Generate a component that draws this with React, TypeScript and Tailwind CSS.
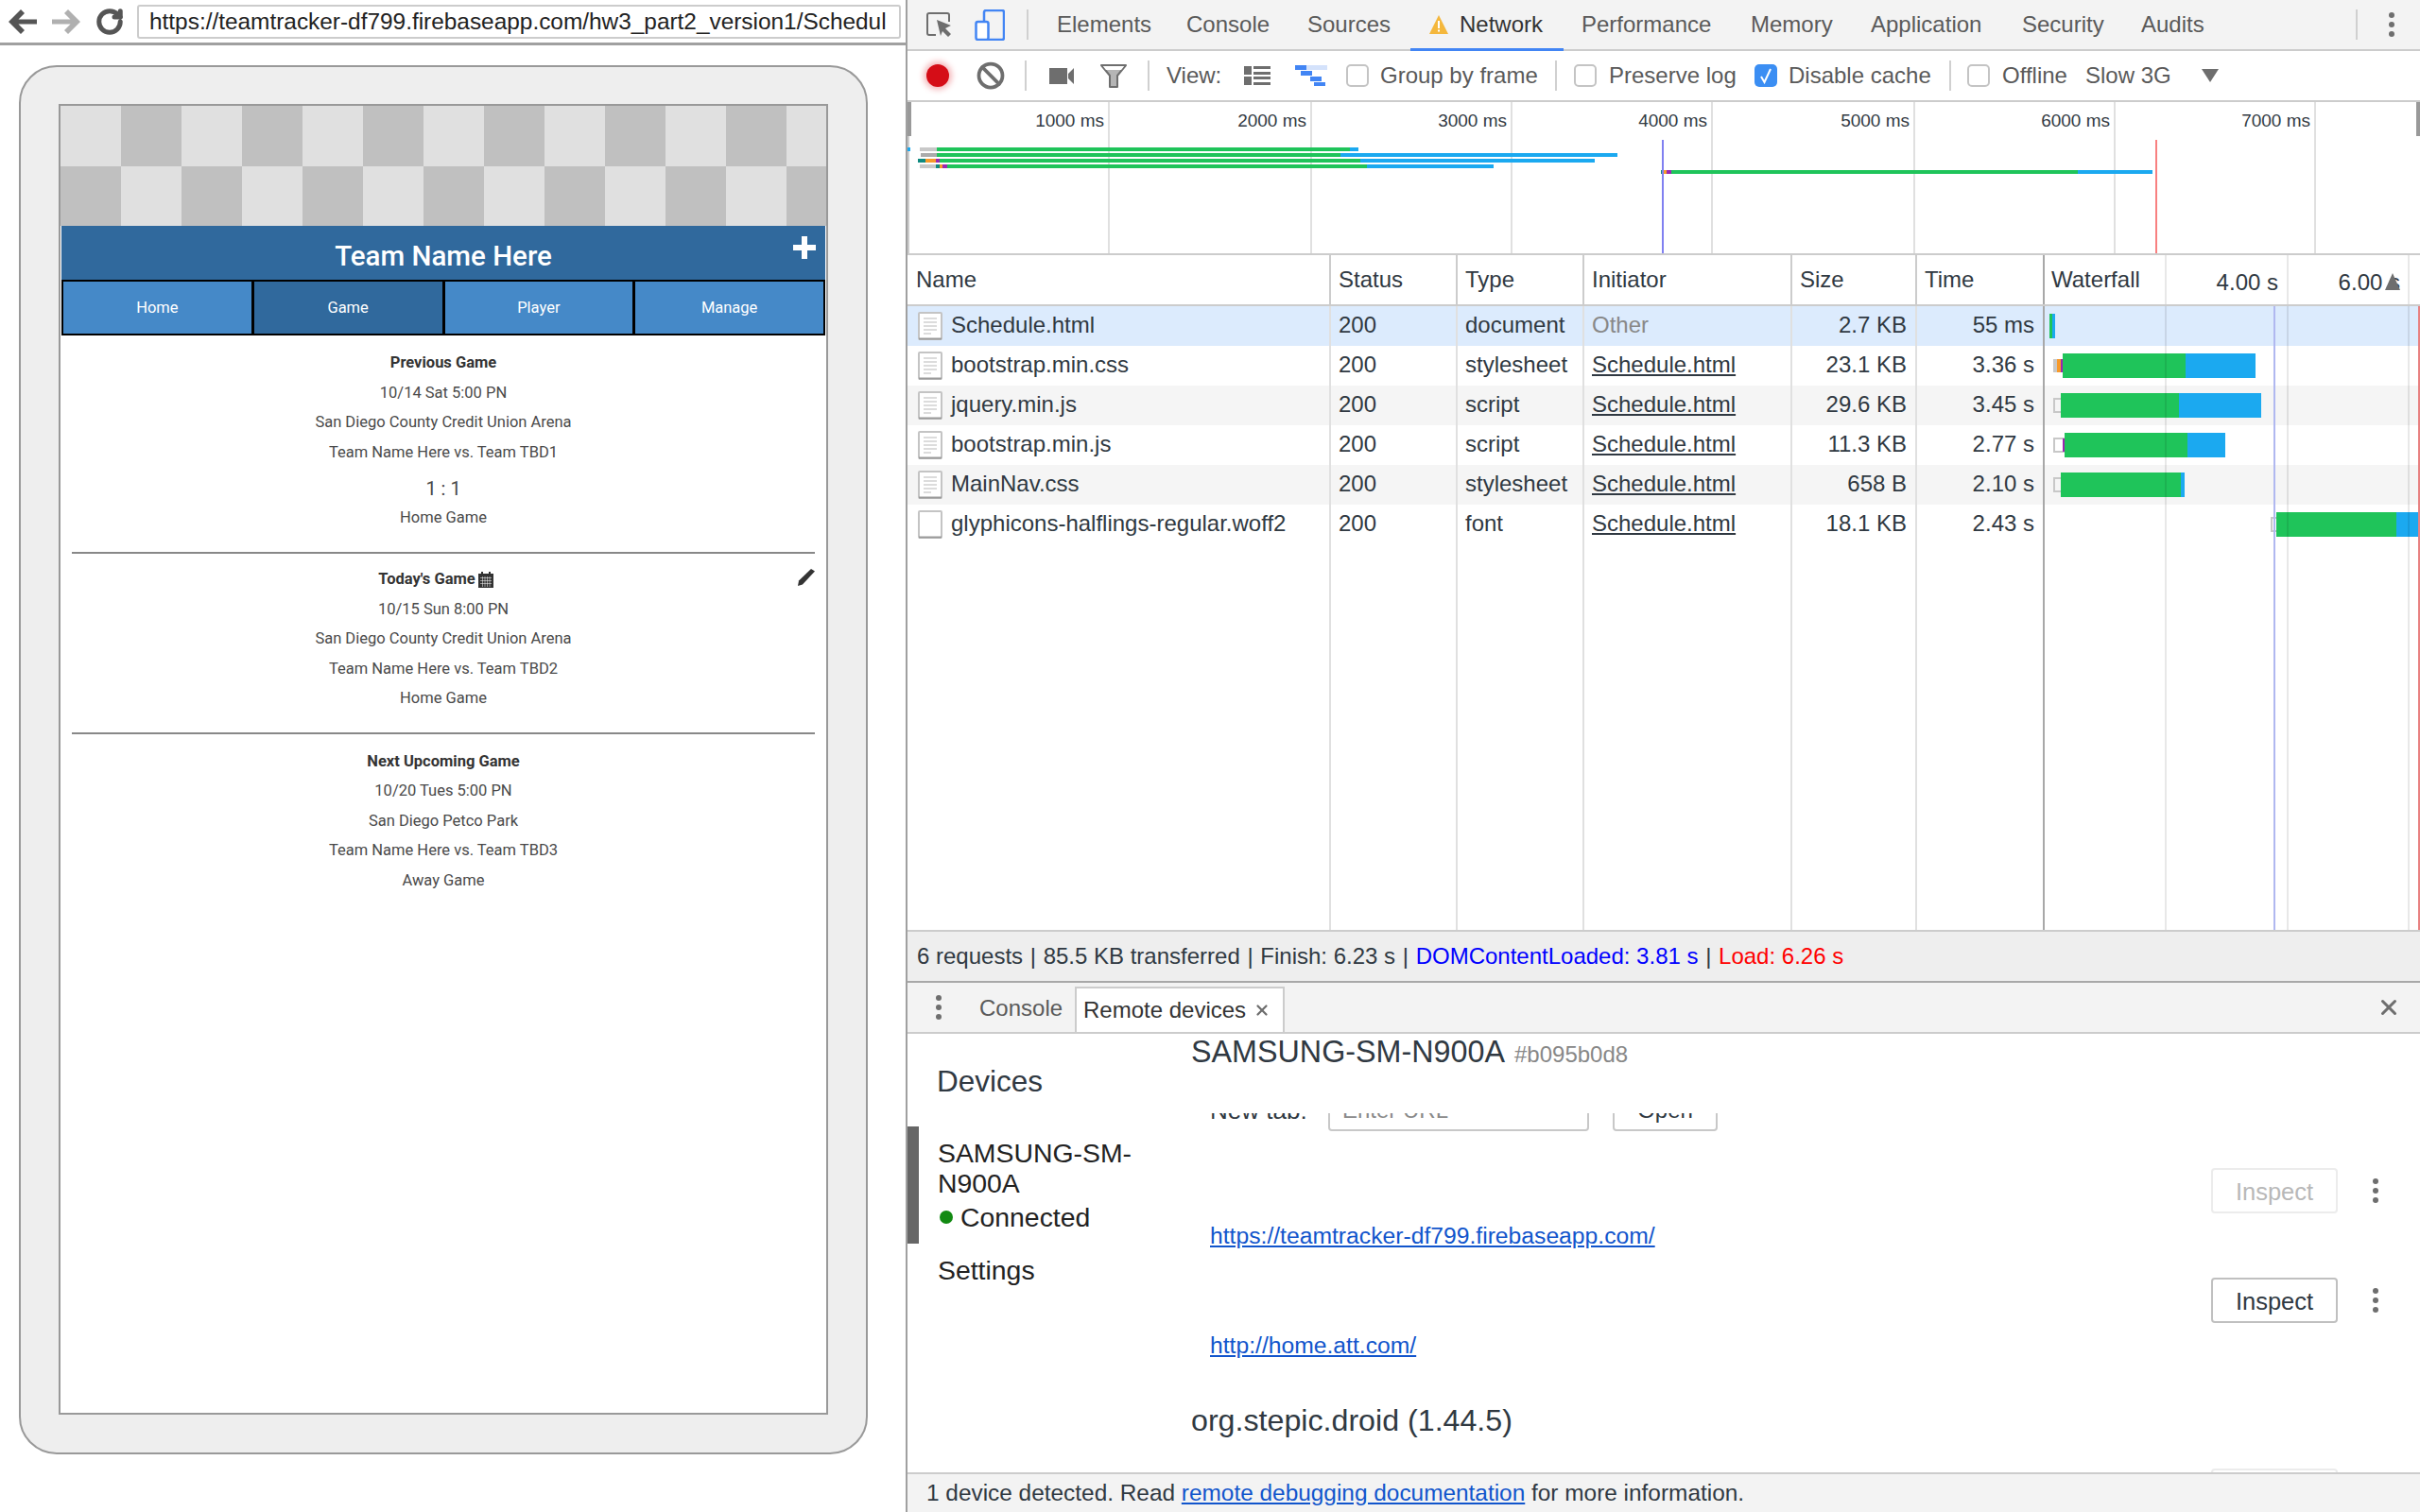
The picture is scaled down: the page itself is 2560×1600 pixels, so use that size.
import { Ban, RotateCw, X } from "lucide-react";

const sans = "font-['Liberation_Sans',sans-serif]";

const tabs = [
  { label: "Elements", w: "w-[137px]" },
  { label: "Console", w: "w-[128px]" },
  { label: "Sources", w: "w-[129px]" },
  { label: "Network", w: "w-[161px]", active: true },
  { label: "Performance", w: "w-[179px]" },
  { label: "Memory", w: "w-[127px]" },
  { label: "Application", w: "w-[160px]" },
  { label: "Security", w: "w-[126px]" },
  { label: "Audits", w: "w-[227px]" },
];

const requests = [
  { name: "Schedule.html", status: "200", type: "document", init: "Other", size: "2.7 KB", time: "55 ms" },
  { name: "bootstrap.min.css", status: "200", type: "stylesheet", init: "Schedule.html", size: "23.1 KB", time: "3.36 s" },
  { name: "jquery.min.js", status: "200", type: "script", init: "Schedule.html", size: "29.6 KB", time: "3.45 s" },
  { name: "bootstrap.min.js", status: "200", type: "script", init: "Schedule.html", size: "11.3 KB", time: "2.77 s" },
  { name: "MainNav.css", status: "200", type: "stylesheet", init: "Schedule.html", size: "658 B", time: "2.10 s" },
  { name: "glyphicons-halflings-regular.woff2", status: "200", type: "font", init: "Schedule.html", size: "18.1 KB", time: "2.43 s", blank: true },
];

const games = [
  {
    title: "Previous Game",
    lines: ["10/14 Sat 5:00 PN", "San Diego County Credit Union Arena", "Team Name Here vs. Team TBD1"],
    score: "1 : 1",
    last: "Home Game",
  },
  {
    title: "Today's Game",
    lines: ["10/15 Sun 8:00 PN", "San Diego County Credit Union Arena", "Team Name Here vs. Team TBD2"],
    last: "Home Game",
    today: true,
  },
  {
    title: "Next Upcoming Game",
    lines: ["10/20 Tues 5:00 PN", "San Diego Petco Park", "Team Name Here vs. Team TBD3"],
    last: "Away Game",
  },
];

function Dots() {
  return (
    <div className="flex flex-col items-center gap-[4px]">
      <span className="w-[6px] h-[6px] rounded-full bg-[#6e6e6e]" />
      <span className="w-[6px] h-[6px] rounded-full bg-[#6e6e6e]" />
      <span className="w-[6px] h-[6px] rounded-full bg-[#6e6e6e]" />
    </div>
  );
}

function Checkbox({ checked }: { checked?: boolean }) {
  return checked ? (
    <span className="flex items-center justify-center w-[24px] h-[24px] rounded-[5px] bg-[#3b8ef3]">
      <svg width="14" height="18" viewBox="0 0 14 18">
        <path d="M2 10l3.5 6L12 2" fill="none" stroke="#fff" strokeWidth="2" />
      </svg>
    </span>
  ) : (
    <span className="block w-[24px] h-[24px] rounded-[5px] border-2 border-[#c4c4c4] bg-white" />
  );
}

function Sep() {
  return <span className="block w-[2px] h-[32px] bg-[#d0d0d0]" />;
}

function FileIcon({ blank }: { blank?: boolean }) {
  return (
    <svg width="26" height="30" viewBox="0 0 26 30" className="shrink-0 mt-[2px]">
      <rect x="1" y="1" width="24" height="28" fill="#fff" stroke="#c4c4c4" strokeWidth="2" rx="1" />
      <path d="M1 28.500h24" stroke="#9a9a9a" strokeWidth="2" />
      {!blank && (
        <path d="M6 7h14M6 11h14M6 15h14M6 19h14M6 23h8" stroke="#dcdcdc" strokeWidth="2" />
      )}
    </svg>
  );
}

function Phone() {
  return (
    <div className="ml-[20px] mt-[21px] w-[898px] h-[1470px] rounded-[40px] border-2 border-[#999999] bg-[#eeeeee] pl-[40px] pt-[39px]">
      <div className="w-[814px] h-[1387px] border-2 border-[#999999] bg-white font-['Roboto',sans-serif] overflow-hidden">
        <div className="grid grid-cols-[repeat(13,64px)] grid-rows-[64px_63px] h-[127px] overflow-hidden">
          {Array.from({ length: 26 }).map((_, i) => {
            const row = i < 13 ? 0 : 1;
            const dark = (i % 13 + row) % 2 === 1;
            return <div key={i} className={dark ? "bg-[#c0c0c0]" : "bg-[#e0e0e0]"} />;
          })}
        </div>
        <div className="mx-[1px] relative h-[57px] bg-[#30699d] flex items-center justify-center pt-[8px] text-white text-[29.500px] font-medium">
          Team Name Here
          <svg width="24" height="24" viewBox="0 0 24 24" className="absolute right-[10px] top-[11px]">
            <path d="M9 0h6v9h9v6h-9v9H9v-9H0V9h9z" fill="#fff" />
          </svg>
        </div>
        <div className="mx-[1px] flex h-[59px]">
          {["Home", "Game", "Player", "Manage"].map((n) => (
            <div
              key={n}
              className={`flex-1 flex items-center justify-center pt-[2px] border-2 border-black -ml-[1px] first:ml-0 text-white text-[16.500px] ${n === "Game" ? "bg-[#30699d]" : "bg-[#4589c8]"}`}
            >
              {n}
            </div>
          ))}
        </div>
        <div className="pt-[14px]">
          {games.map((g, i) => (
            <div key={g.title}>
              <div className="relative">
                <div className={`h-[31.500px] flex items-center justify-center gap-[3px] text-[16.500px] font-bold text-[#333333] ${g.today ? "pr-[16px]" : ""}`}>
                  {g.title}
                  {g.today && (
                    <svg width="16" height="17" viewBox="0 0 16 17">
                      <path d="M0 2h3V0h2v2h6V0h2v2h3v15H0z" fill="#333" />
                      <path d="M2 6.500h12M2 9.500h12M2 12.500h12M4.500 5v11M7 5v11M9.500 5v11M12 5v11" stroke="#fff" strokeWidth=".5" />
                    </svg>
                  )}
                </div>
                {g.today && (
                  <svg width="18" height="18" viewBox="0 0 18 18" className="absolute right-[12px] top-[4px]">
                    <path d="M14 0l4 2.500L5 16.500 0 18l1-5.500z" fill="#333" />
                  </svg>
                )}
              </div>
              <div className="text-[16.500px] text-[#4a4a4a] text-center">
                {g.lines.map((l) => (
                  <div key={l} className="h-[31.500px] flex items-center justify-center">
                    {l}
                  </div>
                ))}
                {g.score && (
                  <div className="h-[37.500px] flex items-center justify-center text-[20px] pt-[6px]">{g.score}</div>
                )}
                <div className="h-[31.500px] flex items-center justify-center">{g.last}</div>
              </div>
              {i === 0 && <div className="mx-[12px] mt-[20px] mb-[12px] h-[2px] bg-[#888888]" />}
              {i === 1 && <div className="mx-[12px] mt-[19px] mb-[14px] h-[2px] bg-[#888888]" />}
            </div>
          ))}
        </div>
      </div>
    </div>
  );
}

function BrowserPane() {
  return (
    <div className="w-[960px] shrink-0 border-r-2 border-[#a0a0a0] bg-white">
      <div className="h-[48px] border-b-[3px] border-[#a0a0a0] flex items-center relative">
        <svg width="30" height="26" viewBox="0 0 30 26" className="ml-[9px]">
          <path d="M13 0l4 4-6.500 6.500H30v5H10.500L17 22l-4 4L0 13z" fill="#555555" />
        </svg>
        <svg width="30" height="26" viewBox="0 0 30 26" className="ml-[16px]">
          <path d="M17 0l-4 4 6.500 6.500H0v5h19.500L13 22l4 4 13-13z" fill="#b0b0b0" />
        </svg>
        <RotateCw className="ml-[16px] text-[#555555]" size={30} strokeWidth={4} />
        <div className={`${sans} ml-[14px] w-[808px] h-[36px] rounded-[3px] border-2 border-[#cccccc] bg-white pl-[11px] pr-[12px] text-[24.400px] leading-[32px] text-[#222222] whitespace-nowrap overflow-hidden`}>
          https://teamtracker-df799.firebaseapp.com/hw3_part2_version1/Schedul
        </div>
      </div>
      <Phone />
    </div>
  );
}

function DevtoolsTabs() {
  return (
    <div className="h-[54px] border-b-2 border-[#cccccc] bg-[#f3f3f3] flex items-center text-[24px] text-[#5a5a5a]">
      <svg width="28" height="26" viewBox="0 0 28 26" className="ml-[20px]">
        <path d="M10 24H3a2 2 0 0 1-2-2V3a2 2 0 0 1 2-2h19a2 2 0 0 1 2 2v7" fill="none" stroke="#6e6e6e" strokeWidth="2" />
        <path d="M11 8l15 6-6 3 6 6-3 3-6-6-2 5z" fill="#6e6e6e" />
      </svg>
      <svg width="32" height="33" viewBox="0 0 32 33" className="ml-[23px]">
        <path d="M10 14V3a2 2 0 0 1 2-2h17a2 2 0 0 1 2 2v27a2 2 0 0 1-2 2H14" fill="none" stroke="#4285f4" strokeWidth="2.500" />
        <rect x="1.500" y="13" width="13" height="19" rx="2" fill="#fff" stroke="#4285f4" strokeWidth="2.500" />
      </svg>
      <span className="ml-[23px]"><Sep /></span>
      <div className="flex ml-[30px] items-center">
        {tabs.map((t) => (
          <div key={t.label} className={`${t.w} shrink-0 relative flex items-center h-[52px] ${t.active ? "text-[#333333]" : ""}`}>
            {t.active && (
              <>
                <svg width="20" height="20" viewBox="0 0 20 20" className="mr-[12px]">
                  <path d="M10 0l10 20H0z" fill="#f4b73c" />
                  <path d="M9 6h2v8H9zM9 15.500h2v2H9z" fill="#fff" />
                </svg>
                <span className="absolute left-[-20px] w-[162px] bottom-[-2px] h-[3px] bg-[#4285f4]" />
              </>
            )}
            {t.label}
          </div>
        ))}
      </div>
      <Sep />
      <span className="ml-[33px]"><Dots /></span>
    </div>
  );
}

function NetToolbar() {
  return (
    <div className="h-[54px] border-b-2 border-[#cccccc] bg-white flex items-center text-[24px] text-[#5a5a5a] whitespace-nowrap">
      <span className="ml-[20px] w-[24px] h-[24px] rounded-full bg-[#d50d17] shadow-[0_0_6px_3px_#f4b6b9]" />
      <Ban className="ml-[29px] text-[#6e6e6e]" size={30} strokeWidth={3} />
      <span className="ml-[21px]"><Sep /></span>
      <svg width="26" height="17" viewBox="0 0 26 17" className="ml-[24px]">
        <path d="M0 0h19v17H0zM20 6l6-6v17l-6-6z" fill="#6e6e6e" />
      </svg>
      <svg width="28" height="25" viewBox="0 0 28 25" className="ml-[28px]">
        <path d="M1 1h26L18 12v12h-8V12z" fill="#b5b5b5" stroke="#6e6e6e" strokeWidth="2" strokeLinejoin="round" />
        <path d="M2 1h24l-4 5H6z" fill="#fff" />
        <path d="M1 1h26" stroke="#6e6e6e" strokeWidth="2" />
      </svg>
      <span className="ml-[22px]"><Sep /></span>
      <span className="ml-[18px] w-[82px]">View:</span>
      <svg width="28" height="20" viewBox="0 0 28 20">
        <path d="M0 0h8v9H0zM10 0h18v3H10zM10 6h18v3H10zM0 11h8v9H0zM10 11h18v3H10zM10 17h18v3H10z" fill="#6e6e6e" />
      </svg>
      <svg width="34" height="22" viewBox="0 0 34 22" className="ml-[26px]">
        <path d="M12 0h22v5H12z" fill="#d4e2fb" />
        <path d="M0 0h12v5H0zM6 6h12v5H6zM16 12h12v5H16zM20 18h12v4H20z" fill="#4285f4" />
      </svg>
      <span className="ml-[20px]"><Checkbox /></span>
      <span className="ml-[12px] w-[185px]">Group by frame</span>
      <Sep />
      <span className="ml-[18px]"><Checkbox /></span>
      <span className="ml-[13px] w-[154px]">Preserve log</span>
      <Checkbox checked />
      <span className="ml-[12px] w-[170px]">Disable cache</span>
      <Sep />
      <span className="ml-[17px]"><Checkbox /></span>
      <span className="ml-[13px] w-[88px]">Offline</span>
      <span className="w-[123px]">Slow 3G</span>
      <svg width="18" height="14" viewBox="0 0 18 14">
        <path d="M0 0h18L9 14z" fill="#6e6e6e" />
      </svg>
    </div>
  );
}

function Overview() {
  const ticks = [
    { label: "1000 ms", w: "w-[214px]" },
    { label: "2000 ms", w: "w-[214px]" },
    { label: "3000 ms", w: "w-[212px]" },
    { label: "4000 ms", w: "w-[212px]" },
    { label: "5000 ms", w: "w-[214px]" },
    { label: "6000 ms", w: "w-[212px]" },
    { label: "7000 ms", w: "w-[212px]" },
  ];
  return (
    <div className="relative h-[162px] border-b-2 border-[#cccccc] bg-white flex overflow-hidden">
      {ticks.map((t) => (
        <div key={t.label} className={`${t.w} shrink-0 border-r-2 border-[#e0e0e0] pr-[4px] pt-[8px] text-right text-[19px] leading-[24px] text-[#333b44]`}>
          {t.label}
        </div>
      ))}
      {/* left and right drag handles */}
      <span className="absolute left-0 top-0 w-[4px] h-[36px] bg-[#999999]" />
      <span className="absolute left-0 top-[36px] w-[2px] h-[124px] bg-[#cccccc]" />
      <span className="absolute right-0 top-0 w-[4px] h-[36px] bg-[#999999]" />
      <svg width="1600" height="160" viewBox="0 0 1600 160" className="absolute left-0 top-0">
        <rect x="0" y="48" width="3" height="4" fill="#1ba9f0" />
        <rect x="13" y="48" width="18" height="4" fill="#c8c8c8" />
        <rect x="31" y="48" width="437" height="4" fill="#1fc45a" />
        <rect x="468" y="48" width="9" height="4" fill="#1ba9f0" />
        <rect x="14" y="54" width="17" height="4" fill="#ababab" />
        <rect x="31" y="54" width="427" height="4" fill="#1fc45a" />
        <rect x="458" y="54" width="293" height="4" fill="#1ba9f0" />
        <rect x="11" y="60" width="8" height="4" fill="#0f8a80" />
        <rect x="19" y="60" width="11" height="4" fill="#f79a2b" />
        <rect x="30" y="60" width="4" height="4" fill="#9c27b0" />
        <rect x="34" y="60" width="445" height="4" fill="#1fc45a" />
        <rect x="479" y="60" width="248" height="4" fill="#1ba9f0" />
        <rect x="13" y="66" width="17" height="4" fill="#c8c8c8" />
        <rect x="30" y="66" width="4" height="4" fill="#0f8a80" />
        <rect x="34" y="66" width="3" height="4" fill="#f79a2b" />
        <rect x="37" y="66" width="5" height="4" fill="#9c27b0" />
        <rect x="42" y="66" width="444" height="4" fill="#1fc45a" />
        <rect x="486" y="66" width="134" height="4" fill="#1ba9f0" />
        <rect x="797" y="72" width="3" height="4" fill="#0f8a80" />
        <rect x="800" y="72" width="3" height="4" fill="#f79a2b" />
        <rect x="803" y="72" width="5" height="4" fill="#9c27b0" />
        <rect x="808" y="72" width="430" height="4" fill="#1fc45a" />
        <rect x="1238" y="72" width="79" height="4" fill="#1ba9f0" />
        <rect x="798" y="40" width="2" height="120" fill="#8080f0" />
        <rect x="1320" y="40" width="2" height="120" fill="#f88080" />
      </svg>
    </div>
  );
}

const colBase = "shrink-0 h-full flex items-center border-r-2";

function TableHeader() {
  return (
    <div className="h-[54px] border-b-2 border-[#cccccc] flex text-[#303942] text-[24px]">
      <div className={`${colBase} border-[#cccccc] w-[448px] pl-[9px]`}>Name</div>
      <div className={`${colBase} border-[#cccccc] w-[134px] pl-[8px]`}>Status</div>
      <div className={`${colBase} border-[#cccccc] w-[134px] pl-[8px]`}>Type</div>
      <div className={`${colBase} border-[#cccccc] w-[220px] pl-[8px]`}>Initiator</div>
      <div className={`${colBase} border-[#cccccc] w-[132px] pl-[8px]`}>Size</div>
      <div className={`${colBase} border-[#a8a8a8] w-[135px] pl-[8px]`}>Time</div>
      <div className={`${colBase} border-[#e8e8e8] w-[129px] pl-[7px]`}>Waterfall</div>
      <div className={`${colBase} border-[#e8e8e8] w-[129px] justify-end pr-[9px] pt-[6px]`}>4.00 s</div>
      <div className={`${colBase} relative border-[#e8e8e8] w-[128px] justify-end whitespace-nowrap -mr-[12px] pr-[8px] pt-[6px]`}>
        6.00 s
        <svg width="16" height="18" viewBox="0 0 16 18" className="absolute right-[8px] top-[19px]">
          <path d="M8 0l8 18H0z" fill="#6e6e6e" />
        </svg>
      </div>
    </div>
  );
}

function TableBody() {
  const cols = "shrink-0 h-full flex items-center border-r-2 border-[#e0e0e0] pb-[2px]";
  return (
    <div className="relative h-[660px] flex flex-col text-[24px] text-[#303942]">
      {requests.map((r, i) => (
        <div
          key={r.name}
          className={`h-[42px] shrink-0 flex ${i === 0 ? "bg-[#dcebfd]" : i % 2 === 0 ? "bg-[#f5f5f5]" : "bg-white"}`}
        >
          <div className={`${cols} w-[448px] pl-[11px] gap-[9px] whitespace-nowrap`}>
            <FileIcon blank={r.blank} />
            {r.name}
          </div>
          <div className={`${cols} w-[134px] pl-[8px]`}>{r.status}</div>
          <div className={`${cols} w-[134px] pl-[8px]`}>{r.type}</div>
          <div className={`${cols} w-[220px] pl-[8px] ${r.init === "Other" ? "text-[#888888]" : "underline"}`}>{r.init}</div>
          <div className={`${cols} w-[132px] justify-end pr-[9px]`}>{r.size}</div>
          <div className={`${cols} !border-[#a8a8a8] w-[135px] justify-end pr-[9px]`}>{r.time}</div>
        </div>
      ))}
      <div className="flex-1 flex">
        <div className="shrink-0 h-full border-r-2 border-[#e0e0e0] w-[448px]" />
        <div className="shrink-0 h-full border-r-2 border-[#e0e0e0] w-[134px]" />
        <div className="shrink-0 h-full border-r-2 border-[#e0e0e0] w-[134px]" />
        <div className="shrink-0 h-full border-r-2 border-[#e0e0e0] w-[220px]" />
        <div className="shrink-0 h-full border-r-2 border-[#e0e0e0] w-[132px]" />
        <div className="shrink-0 h-full border-r-2 border-[#a8a8a8] w-[135px]" />
      </div>
      <svg width="397" height="660" viewBox="0 0 397 660" className="absolute right-0 top-0">
        <rect x="5" y="8" width="3" height="26" fill="#1fc45a" />
        <rect x="8" y="8" width="3" height="26" fill="#1ba9f0" />

        <rect x="9" y="56" width="4" height="14" fill="#c8c8c8" />
        <rect x="13" y="56" width="4" height="14" fill="#f79a2b" />
        <rect x="17" y="56" width="2" height="14" fill="#9c27b0" />
        <rect x="19" y="50" width="130" height="26" fill="#1fc45a" />
        <rect x="149" y="50" width="74" height="26" fill="#1ba9f0" />

        <rect x="10" y="98" width="8" height="14" fill="none" stroke="#c8c8c8" strokeWidth="2" />
        <rect x="17" y="92" width="125" height="26" fill="#1fc45a" />
        <rect x="142" y="92" width="87" height="26" fill="#1ba9f0" />

        <rect x="10" y="140" width="10" height="14" fill="none" stroke="#c8c8c8" strokeWidth="2" />
        <rect x="19" y="140" width="2" height="14" fill="#9c27b0" />
        <rect x="21" y="134" width="130" height="26" fill="#1fc45a" />
        <rect x="151" y="134" width="40" height="26" fill="#1ba9f0" />

        <rect x="10" y="182" width="8" height="14" fill="none" stroke="#c8c8c8" strokeWidth="2" />
        <rect x="17" y="176" width="127" height="26" fill="#1fc45a" />
        <rect x="144" y="176" width="4" height="26" fill="#1ba9f0" />

        <rect x="240" y="224" width="6" height="14" fill="none" stroke="#c8c8c8" strokeWidth="2" />
        <rect x="245" y="218" width="127" height="26" fill="#1fc45a" />
        <rect x="372" y="218" width="25" height="26" fill="#1ba9f0" />

        <rect x="127" y="0" width="2" height="660" fill="#000" fillOpacity=".09" />
        <rect x="256" y="0" width="2" height="660" fill="#000" fillOpacity=".09" />
        <rect x="384" y="0" width="2" height="660" fill="#000" fillOpacity=".09" />
        <rect x="242" y="0" width="2" height="660" fill="#b0b8f0" />
        <rect x="395" y="0" width="2" height="660" fill="#e88080" />
      </svg>
    </div>
  );
}

function StatusBar() {
  return (
    <div className="h-[56px] border-t-2 border-b-2 border-t-[#cccccc] border-b-[#a8a8a8] bg-[#eeeeee] flex items-center pl-[10px] text-[24px] text-[#303942]">
      <div className="whitespace-pre">
        6 requests <span className="mx-[1px]">|</span> 85.5 KB transferred <span className="mx-[1px]">|</span> Finish: 6.23 s <span className="mx-[1px]">|</span>{" "}
        <span className="text-[#0000ff]">DOMContentLoaded: 3.81 s</span> <span className="mx-[1px]">|</span> <span className="text-[#ff0000]">Load: 6.26 s</span>
      </div>
    </div>
  );
}

function DrawerTabs() {
  return (
    <div className="h-[54px] border-b-2 border-[#cccccc] bg-[#f3f3f3] flex items-end text-[24px] text-[#5a5a5a]">
      <div className="self-center ml-[30px]"><Dots /></div>
      <span className="ml-[40px] self-center w-[101px] pt-[1px]">Console</span>
      <div className="h-[48px] w-[222px] border-2 border-b-0 border-[#cccccc] bg-white flex items-center pl-[7px] text-[#333333]">
        Remote devices
        <X className="ml-[8px] text-[#6e6e6e]" size={18} strokeWidth={3} />
      </div>
      <X className="ml-auto mr-[20px] self-center text-[#6e6e6e]" size={26} strokeWidth={2.800} />
    </div>
  );
}

function InspectRow({ disabled }: { disabled?: boolean }) {
  return (
    <div className="flex items-center justify-end pr-[44px]">
      <div
        className={`w-[134px] h-[48px] pt-[2px] flex items-center justify-center rounded-[4px] border-2 text-[25.500px] ${disabled ? "border-[#ececec] text-[#b8b8b8]" : "border-[#c0c0c0] text-[#303942]"}`}
      >
        Inspect
      </div>
      <span className="ml-[37px]"><Dots /></span>
    </div>
  );
}

function RemoteDevices() {
  return (
    <div className="h-[464px] flex bg-white text-[#303942]">
      <div className="w-[300px] shrink-0 pt-[31px] text-[#222222]">
        <div className="pl-[31px] h-[40px] flex items-center text-[31.500px] text-[#303942]">Devices</div>
        <div className="mt-[27px] h-[124px] border-l-[12px] border-[#666666] pl-[20px] pt-[12px] text-[28.400px] leading-[32px]">
          <div>SAMSUNG-SM-</div>
          <div>N900A</div>
          <div className="mt-[4px] flex items-center gap-[8px]">
            <span className="ml-[2px] w-[14px] h-[14px] rounded-full bg-[#128a12]" />
            Connected
          </div>
        </div>
        <div className="mt-[12px] pl-[32px] text-[28.400px] leading-[32px]">Settings</div>
      </div>
      <div className="flex-1 min-w-0 flex flex-col">
        <div className="h-[84px] shrink-0 flex items-baseline gap-[10px] pt-[1px] leading-[36px]">
          <span className="text-[32.300px]">SAMSUNG-SM-N900A</span>
          <span className="text-[24px] text-[#888888]">#b095b0d8</span>
        </div>
        <div className="h-[380px] overflow-hidden">
          <div className="-mt-[25px] text-[24px]">
            <div className="flex items-center h-[44px] pl-[20px]">
              <span className="w-[125px] text-[26px]">New tab:</span>
              <div className="w-[276px] h-[44px] rounded-[4px] border-2 border-[#c8c8c8] pl-[13px] flex items-center text-[#8a8a8a]">Enter URL</div>
              <div className="ml-[25px] w-[111px] h-[44px] rounded-[4px] border-2 border-[#c8c8c8] flex items-center justify-center">Open</div>
            </div>
            <div className="mt-[39px]"><InspectRow disabled /></div>
            <div className="mt-[9px] h-[30px] leading-[30px] pl-[20px] text-[24.700px] text-[#1155cc] underline">https://teamtracker-df799.firebaseapp.com/</div>
            <div className="mt-[29px]"><InspectRow /></div>
            <div className="mt-[9px] h-[30px] leading-[30px] pl-[20px] text-[24.700px] text-[#1155cc] underline">http://home.att.com/</div>
            <div className="mt-[44px] h-[40px] leading-[40px] text-[32.200px]">org.stepic.droid (1.44.5)</div>
            <div className="mt-[31px]"><InspectRow disabled /></div>
          </div>
        </div>
      </div>
    </div>
  );
}

function DevtoolsFooter() {
  return (
    <div className="h-[42px] border-t-2 border-[#cccccc] bg-[#f3f3f3] flex items-center pl-[20px] text-[24.400px] text-[#303942]">
      <div className="whitespace-pre">
        1 device detected. Read <span className="text-[#1155cc] underline">remote debugging documentation</span> for more information.
      </div>
    </div>
  );
}

export default function App() {
  return (
    <div className={`${sans} w-[2560px] h-[1600px] overflow-hidden flex bg-white`}>
      <BrowserPane />
      <div className="w-[1600px] shrink-0 flex flex-col">
        <DevtoolsTabs />
        <NetToolbar />
        <Overview />
        <TableHeader />
        <TableBody />
        <StatusBar />
        <DrawerTabs />
        <RemoteDevices />
        <DevtoolsFooter />
      </div>
    </div>
  );
}
